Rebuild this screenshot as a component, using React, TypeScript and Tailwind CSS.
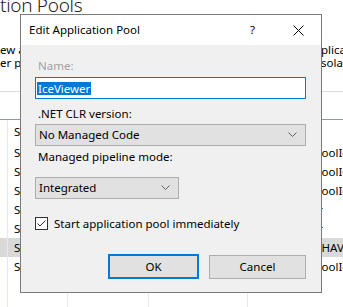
import React from 'react';

const rows = [
  { status: 'Started', identity: 'ApplicationPoolIdentity', pad: 'pl-[6px]' },
  { status: 'Started', identity: 'ApplicationPoolIdentity', pad: 'pl-[6px]' },
  { status: 'Started', identity: 'ApplicationPoolIdentity', pad: 'pl-[6px]' },
  { status: 'Started', identity: 'Administrator', pad: 'pl-[0px]' },
  { status: 'Started', identity: 'Administrator', pad: 'pl-[0px]' },
  { status: 'Started', identity: 'CONTOSO\\HAVERLY', pad: 'pl-[14px]', selected: true },
  { status: 'Started', identity: 'ApplicationPoolIdentity', pad: 'pl-[6px]' },
];

const cell = 'border-r border-[#e6eaf0] overflow-hidden whitespace-nowrap';

const Chevron = () => (
  <svg width="9" height="6" viewBox="0 0 9 6" className="shrink-0">
    <path d="M0.5 0.5 L4.5 4.5 L8.5 0.5" fill="none" stroke="#5f5f5f" strokeWidth="1" />
  </svg>
);

const App = () => {
  return (
    <div className="relative w-[343px] h-[307px] overflow-hidden bg-white text-black text-[11.5px] font-['Noto_Sans',sans-serif]">
      {/* page behind the dialog */}
      <div className="h-[48px]">
        <div className="-mt-[5px] h-[20px] leading-[20px] text-[19px] font-light text-[#1e1e1e] whitespace-nowrap tracking-[-0.3px]">
          tion Pools
        </div>
      </div>
      <div className="h-[26px] leading-[13px]">
        <div className="flex whitespace-nowrap">
          <span className="w-[321px] shrink-0 overflow-hidden">ew and manage the list of application pools on the server. Ap</span>
          <span>plication pools</span>
        </div>
        <div className="flex whitespace-nowrap">
          <span className="w-[321px] shrink-0 overflow-hidden">er processes, contain one or more applications, and provide i</span>
          <span>solation among</span>
        </div>
      </div>
      <div className="h-[23px] border-b border-[#dcdcdc]" />
      <div className="h-[28px] border-b border-[#8f99a6]" />

      <div className="grid grid-cols-[8px_60px_81px_99px_1fr] h-[23px] leading-[23px]">
        <div className={cell} />
        <div className={`${cell} pl-[6px]`}>Status</div>
        <div className={cell} />
        <div className={cell} />
        <div className="pl-[4px] whitespace-nowrap overflow-hidden">Identity</div>
      </div>
      {rows.map((row, i) => (
        <div
          key={i}
          className={`grid grid-cols-[8px_60px_81px_99px_1fr] h-[19px] leading-[19px] ${row.selected ? 'bg-[#d9d9d9]' : ''}`}
        >
          <div className={cell} />
          <div className={`${cell} pl-[6px]`}>{row.status}</div>
          <div className={`${cell} pl-[6px]`}>v4.0</div>
          <div className={`${cell} pl-[6px]`}>Integrated</div>
          <div className={`${row.pad} whitespace-nowrap overflow-hidden`}>{row.identity}</div>
        </div>
      ))}
      <div className="grid grid-cols-[8px_60px_81px_99px_1fr] h-[40px]">
        <div className={cell} />
        <div className={cell} />
        <div className={cell} />
        <div className={cell} />
        <div />
      </div>

      {/* dialog window */}
      <div className="absolute left-[20px] top-[14px] w-[302px] h-[279px] border border-[#7a7a7a] bg-[#f0f0f0] flex flex-col">
        <div className="h-[30px] shrink-0 bg-white flex items-center pl-[8px]">
          <span>Edit Application Pool</span>
          <span className="ml-auto mr-[38px]">?</span>
          <svg width="11" height="11" viewBox="0 0 11 11" className="mr-[17px]">
            <path d="M0.5 0.5 L10.5 10.5 M10.5 0.5 L0.5 10.5" stroke="#000" strokeWidth="1" />
          </svg>
        </div>

        <div className="flex flex-col pl-[14px] pt-[13px]">
          <div className="h-[16px] leading-[16px] text-[#a0a0a0] pl-[3px]">Name:</div>
          <div className="mt-[3px] w-[271px] h-[22px] border border-[#0078d7] bg-white flex items-center pl-[1px]">
            <span className="h-[13px] leading-[13px] bg-[#0078d7] text-white px-[1px]">IceViewer</span>
          </div>

          <div className="mt-[7px] h-[16px] leading-[16px] pl-[3px]">.NET CLR version:</div>
          <div className="mt-[2px] w-[271px] h-[22px] border border-[#adadad] bg-[#e1e1e1] flex items-center pl-[3px] pr-[8px]">
            <span>No Managed Code</span>
            <span className="ml-auto"><Chevron /></span>
          </div>

          <div className="mt-[3px] h-[16px] leading-[16px] pl-[3px]">Managed pipeline mode:</div>
          <div className="mt-[12px] w-[144px] h-[22px] border border-[#adadad] bg-[#e1e1e1] flex items-center pl-[3px] pr-[8px]">
            <span>Integrated</span>
            <span className="ml-auto"><Chevron /></span>
          </div>

          <label className="mt-[18px] flex items-center h-[13px]">
            <span className="w-[13px] h-[13px] border border-[#333] bg-white flex items-center justify-center">
              <svg width="11" height="11" viewBox="0 0 11 11">
                <path d="M1.5 5.5 L4 8 L9.5 2.5" fill="none" stroke="#333" strokeWidth="1" />
              </svg>
            </span>
            <span className="ml-[6px]">Start application pool immediately</span>
          </label>

          <div className="mt-[24px] flex justify-end gap-[10px] w-[271px]">
            <button className="w-[91px] h-[25px] border-2 border-[#0078d7] bg-[#e1e1e1]">OK</button>
            <button className="w-[97px] h-[24px] mt-[1px] border border-[#adadad] bg-[#e1e1e1]">Cancel</button>
          </div>
        </div>
      </div>
    </div>
  );
};

export default App;
